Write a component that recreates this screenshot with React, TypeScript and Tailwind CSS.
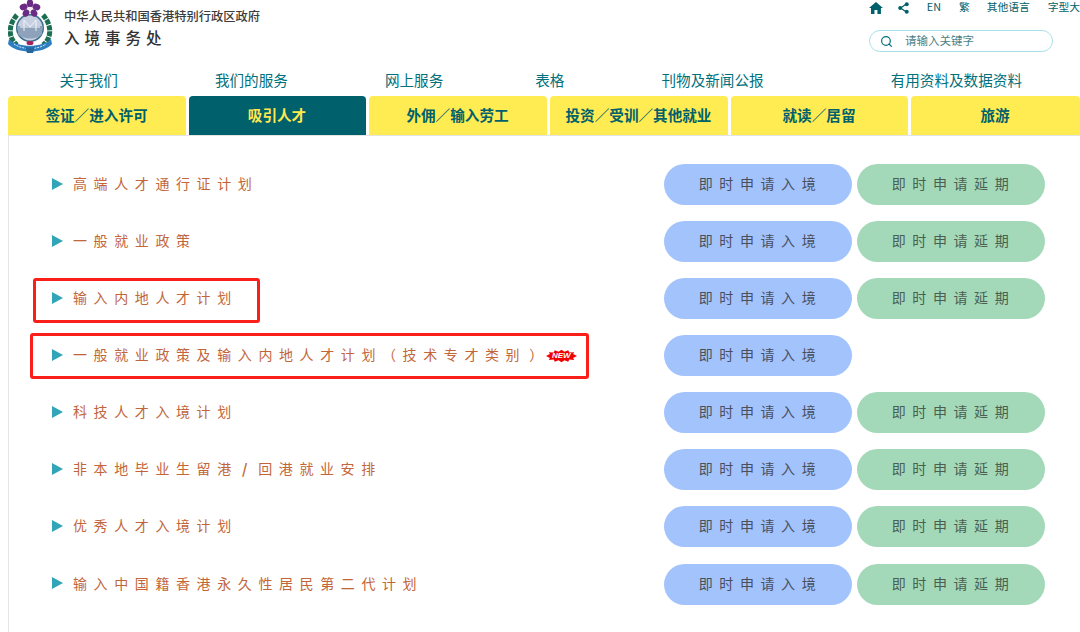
import React from 'react';
import { Search } from 'lucide-react';

const navLinks = [
  { label: '关于我们', className: 'ml-[59.5px]' },
  { label: '我们的服务', className: 'ml-[97px]' },
  { label: '网上服务', className: 'ml-[97px]' },
  { label: '表格', className: 'ml-[92px]' },
  { label: '刊物及新闻公报', className: 'ml-[97px]' },
  { label: '有用资料及数据资料', className: 'ml-[127px]' },
];

const tabs = [
  { label: '签证／进入许可', className: 'w-[178px]' },
  { label: '吸引人才', className: 'w-[177px]', active: true },
  { label: '外佣／输入劳工', className: 'w-[178px]' },
  { label: '投资／受训／其他就业', className: 'w-[178px]' },
  { label: '就读／居留', className: 'w-[177px]' },
  { label: '旅游', className: 'flex-1' },
];

const rows = [
  { id: 'talent-pass', label: '高端人才通行证计划', extend: true },
  { id: 'gep', label: '一般就业政策', extend: true },
  { id: 'asmtp', label: '输入内地人才计划', extend: true, box: 'left-[24px] top-0 h-[45px] w-[227px]' },
  {
    id: 'tech',
    label: (
      <>
        一般就业政策及输入内地人才计划（技术专才类别<span className="ml-[3px]">）</span>
      </>
    ),
    extend: false,
    isNew: true,
    box: 'left-[21px] top-[-2px] h-[46px] w-[559px]',
  },
  { id: 'techtas', label: '科技人才入境计划', extend: true },
  {
    id: 'irnhg',
    label: (
      <>
        非本地毕业生留港<span className="inline-block w-[20.4px] text-center font-bold">/</span>回港就业安排
      </>
    ),
    extend: true,
  },
  { id: 'qmas', label: '优秀人才入境计划', extend: true },
  { id: 'second-gen', label: '输入中国籍香港永久性居民第二代计划', extend: true },
];

const Emblem = () => (
  <svg width="46" height="56" viewBox="0 0 46 56" className="shrink-0">
    {/* wreath */}
    <path d="M9 15 C0 25 0 38 9 45" fill="none" stroke="#1c6e52" strokeWidth="5" strokeDasharray="5 1" />
    <path d="M35 15 C44 25 44 38 35 45" fill="none" stroke="#1c6e52" strokeWidth="5" strokeDasharray="5 1" />
    <circle cx="22" cy="28" r="14" fill="#3d6f8f" />
    <circle cx="22" cy="28" r="12.5" fill="#c6d0e0" />
    <path d="M10 26 H34 V34 C30 40 14 40 10 34 Z" fill="#8ea2bb" />
    <path d="M12 27 H32 M16 20 V31 M28 20 V31 M16 20 L22 27 L28 20" stroke="#eef2f7" strokeWidth="1" fill="none" />
    {/* ribbon */}
    <path d="M1 39 C9 48 35 48 43 39 L44 44 C36 54 8 54 0 44 Z" fill="#2f7fc0" />
    <path d="M6 44 C14 50 30 50 38 44" stroke="#dceaf5" strokeWidth="1" fill="none" strokeDasharray="2 1" />
    <rect x="18.5" y="41" width="7" height="4" rx="2" fill="#a4235f" />
    <path d="M17 46 C20 48 24 48 27 46 L25 53 L19 53 Z" fill="#24679f" />
    {/* bauhinia */}
    <g fill="#6a2b84">
      <ellipse cx="22" cy="3.4" rx="3.2" ry="4" />
      <ellipse cx="15.6" cy="7" rx="4" ry="3.2" transform="rotate(-20 15.6 7)" />
      <ellipse cx="28.4" cy="7" rx="4" ry="3.2" transform="rotate(20 28.4 7)" />
      <ellipse cx="18" cy="13" rx="3.2" ry="3.8" transform="rotate(30 18 13)" />
      <ellipse cx="26" cy="13" rx="3.2" ry="3.8" transform="rotate(-30 26 13)" />
    </g>
    <circle cx="22" cy="8.5" r="1.8" fill="#efe6f2" />
  </svg>
);

const NewBadge = () => (
  <span className="relative ml-[-4px] inline-flex h-[14px] w-[31px] items-center justify-center">
    <svg width="31" height="14" viewBox="0 0 32 14" className="absolute inset-0">
      <polygon
        fill="#f00000"
        points="0,7 4,5 3,3 8,3.5 9,1 13,2.5 16,0.5 19,2.5 23,1 24,3.5 29,3 28,5 32,7 28,9 29,11 24,10.5 23,13 19,11.5 16,13.5 13,11.5 9,13 8,10.5 3,11 4,9"
      />
    </svg>
    <span className="relative font-['Liberation_Sans',sans-serif] text-[8px] font-bold italic leading-none text-white">
      NEW
    </span>
  </span>
);

const App: React.FC = () => {
  return (
    <div className="h-[632px] w-[1080px] overflow-hidden bg-white font-['Noto_Sans_CJK_SC','Noto_Sans',sans-serif]">
      {/* Header */}
      <div className="flex h-[66px] justify-between pl-2">
        <div className="flex">
          <Emblem />
          <div className="ml-[10px] pt-[8px]">
            <div className="whitespace-nowrap text-[12.25px] font-medium leading-[17px] text-[#3c3c3c]">
              中华人民共和国香港特别行政区政府
            </div>
            <div className="mt-[2px] text-[15.5px] font-medium leading-[20px] tracking-[5px] text-[#333333]">
              入境事务处
            </div>
          </div>
        </div>
        <div className="w-[212px] overflow-hidden">
          <div className="flex h-[15px] items-center whitespace-nowrap text-[10.75px] leading-none text-[#00606b]">
            <svg width="14" height="12" viewBox="0 0 14 12" className="ml-[1px]">
              <path d="M7 0 L14 6 L12 6 L12 12 L8.5 12 L8.5 8 L5.5 8 L5.5 12 L2 12 L2 6 L0 6 Z" fill="#00606b" />
            </svg>
            <svg width="11" height="12" viewBox="0 0 11 12" className="ml-[15px]">
              <path d="M8.5 2 L2.5 6 L8.5 10" stroke="#00606b" strokeWidth="1.2" fill="none" />
              <circle cx="8.8" cy="2.2" r="2" fill="#00606b" />
              <circle cx="2.2" cy="6" r="2" fill="#00606b" />
              <circle cx="8.8" cy="9.8" r="2" fill="#00606b" />
            </svg>
            <span className="ml-[18px]">EN</span>
            <span className="ml-[18px]">繁</span>
            <span className="ml-[17px]">其他语言</span>
            <span className="ml-[18px]">字型大</span>
          </div>
          <div className="ml-[1px] mt-[15px] flex h-[22px] w-[184px] items-center rounded-full border border-[#a9e2ea] pl-[10px]">
            <Search size={13} strokeWidth={2.2} className="text-[#00707c]" />
            <span className="ml-[12px] text-[11.5px] text-[#4d7f86]">请输入关键字</span>
          </div>
        </div>
      </div>

      {/* Main nav */}
      <div className="flex h-[30px] items-center pb-[2px] text-[14.6px] text-[#00707c]">
        {navLinks.map((link) => (
          <div key={link.label} className={`${link.className} shrink-0 whitespace-nowrap`}>
            {link.label}
          </div>
        ))}
      </div>

      {/* Tabs */}
      <div className="flex gap-[3px] pl-[8px]">
        {tabs.map((tab) => (
          <div
            key={tab.label}
            className={`${tab.className} flex h-[39px] items-center justify-center whitespace-nowrap rounded-t-[4px] pb-[2px] pr-[1px] text-[14.6px] font-bold ${
              tab.active ? 'bg-[#00606b] text-[#ffe94f]' : 'bg-[#ffec52] text-[#00606b]'
            }`}
          >
            {tab.label}
          </div>
        ))}
      </div>

      {/* Panel */}
      <div className="ml-[8px] h-[497px] border-l border-t border-[#e4e4e4] pt-[28px]">
        {rows.map((row) => (
          <div key={row.id} className="relative flex h-[57.09px] items-start">
            <div className="flex h-[41px] w-[655px] shrink-0 items-center pl-[43px]">
              <span className="mb-[2px] h-0 w-0 border-y-[6px] border-l-[11px] border-y-transparent border-l-[#33a5b8]" />
              <span className="ml-[10px] whitespace-nowrap pb-[3px] text-[14px] leading-none tracking-[6.6px] text-[#c2663a]">
                {row.label}
              </span>
              {row.isNew && <NewBadge />}
            </div>
            <div className="flex gap-[5px]">
              <div className="flex h-[41px] w-[188px] items-center justify-center rounded-full bg-[#a3c3fd] pb-[2px] pl-[5px] text-[14px] tracking-[6.6px] text-[#4a4f5c]">
                即时申请入境
              </div>
              {row.extend && (
                <div className="flex h-[41px] w-[188px] items-center justify-center rounded-full bg-[#a3d9b8] pb-[2px] pl-[5px] text-[14px] tracking-[6.6px] text-[#4a5f52]">
                  即时申请延期
                </div>
              )}
            </div>
            {row.box && <div className={`${row.box} absolute rounded-[3px] border-[3px] border-[#fb1f1a]`} />}
          </div>
        ))}
      </div>
    </div>
  );
};

export default App;
